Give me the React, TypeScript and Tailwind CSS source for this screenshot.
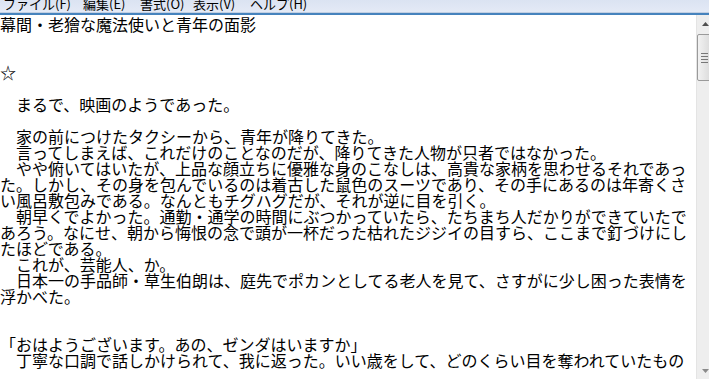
import React from 'react';

const lines: string[] = [
  '幕間・老獪な魔法使いと青年の面影',
  '',
  '',
  '☆',
  '',
  '　まるで、映画のようであった。',
  '',
  '　家の前につけたタクシーから、青年が降りてきた。',
  '　言ってしまえば、これだけのことなのだが、降りてきた人物が只者ではなかった。',
  '　やや俯いてはいたが、上品な顔立ちに優雅な身のこなしは、高貴な家柄を思わせるそれであっ',
  'た。しかし、その身を包んでいるのは着古した鼠色のスーツであり、その手にあるのは年寄くさ',
  'い風呂敷包みである。なんともチグハグだが、それが逆に目を引く。',
  '　朝早くでよかった。通勤・通学の時間にぶつかっていたら、たちまち人だかりができていたで',
  'あろう。なにせ、朝から悔恨の念で頭が一杯だった枯れたジジイの目すら、ここまで釘づけにし',
  'たほどである。',
  '　これが、芸能人、か。',
  '　日本一の手品師・草生伯朗は、庭先でポカンとしてる老人を見て、さすがに少し困った表情を',
  '浮かべた。',
  '',
  '',
  '「おはようございます。あの、ゼンダはいますか」',
  '　丁寧な口調で話しかけられて、我に返った。いい歳をして、どのくらい目を奪われていたもの',
];

const menus = [
  { label: 'ファイル(F)', w: 'w-[80px]' },
  { label: '編集(E)', w: 'w-[57px]' },
  { label: '書式(O)', w: 'w-[53px]' },
  { label: '表示(V)', w: 'w-[57px]' },
  { label: 'ヘルプ(H)', w: 'w-[70px]' },
];

function ScrollBar() {
  return (
    <div className="w-[17px] shrink-0 bg-[#eeeeee] border-l border-[#e4e4e4] flex flex-col">
      {/* up arrow */}
      <div className="h-[17px] flex items-center justify-center">
        <svg width="7" height="4" viewBox="0 0 7 4">
          <path d="M0 4 L3.5 0 L7 4 Z" fill="#505050" />
        </svg>
      </div>
      {/* thumb */}
      <div className="mt-[2px] h-[47px] rounded-[2px] border border-[#9a9a9a] bg-gradient-to-r from-[#f2f2f2] to-[#d8d8d8] flex flex-col items-center justify-center gap-[2px] pr-[1px]">
        <div className="w-[7px] h-px bg-[#777777]" />
        <div className="w-[7px] h-px bg-[#777777]" />
        <div className="w-[7px] h-px bg-[#777777]" />
        <div className="w-[7px] h-px bg-[#777777]" />
      </div>
      <div className="flex-1" />
      {/* down arrow */}
      <div className="h-[17px] flex items-center justify-center">
        <svg width="7" height="4" viewBox="0 0 7 4">
          <path d="M0 0 L3.5 4 L7 0 Z" fill="#8a8a8a" />
        </svg>
      </div>
    </div>
  );
}

export default function App() {
  return (
    <div className="w-[709px] h-[379px] overflow-hidden bg-white flex flex-col">
      {/* menu bar (top cut off) */}
      <div className="h-[12px] shrink-0 overflow-hidden bg-gradient-to-b from-[#dbe3f2] to-[#e4eaf6] flex pl-[3px]">
        {menus.map((m) => (
          <span
            key={m.label}
            className={`${m.w} shrink-0 -mt-[3px] text-[13px] leading-[13px] text-black whitespace-pre`}
            style={{ fontFamily: '"Noto Sans CJK JP", sans-serif' }}
          >
            {m.label}
          </span>
        ))}
      </div>
      <div className="h-px shrink-0 bg-[#c2cfe2]" />
      <div className="h-[2px] shrink-0 bg-[#4683bd]" />

      {/* editor */}
      <div className="flex-1 flex min-h-0">
        <div
          className="w-[696px] shrink-0 pt-px overflow-hidden text-[16px] leading-[16px] text-black"
          style={{ fontFamily: '"Noto Sans CJK JP", sans-serif' }}
        >
          {lines.map((l, i) => (
            <div key={i} className="h-[16px] whitespace-pre">
              {l}
            </div>
          ))}
        </div>
        <ScrollBar />
      </div>
    </div>
  );
}
